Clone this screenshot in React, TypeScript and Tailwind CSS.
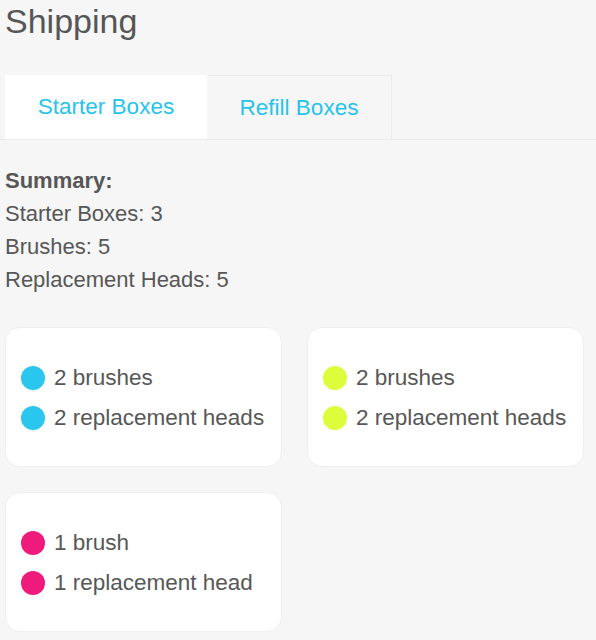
import { useState } from "react";

const boxes = [
  {
    color: "bg-[#29c6ee]",
    items: ["2 brushes", "2 replacement heads"],
  },
  {
    color: "bg-[#dcfc3c]",
    items: ["2 brushes", "2 replacement heads"],
  },
  {
    color: "bg-[#ee1a7c]",
    items: ["1 brush", "1 replacement head"],
  },
];

function BoxCard({ color, items }: { color: string; items: string[] }) {
  return (
    <div className="rounded-[15px] border border-[#efefef] bg-white pl-[15px] pt-[30px] pb-7">
      {items.map((item) => (
        <div key={item} className="flex h-10 items-center gap-[9px]">
          <span className={`h-6 w-6 shrink-0 rounded-full ${color}`} />
          <span className="text-[22.5px] leading-none text-[#575757]">{item}</span>
        </div>
      ))}
    </div>
  );
}

export default function App() {
  const [tab, setTab] = useState("starter");

  return (
    <div
      className="min-h-[640px] bg-[#f6f6f6] pb-4"
      style={{ fontFamily: '"Liberation Sans", Arial, sans-serif' }}
    >
      <h1 className="px-[5px] pt-[1px] text-[34px] leading-[40px] text-[#565656]">Shipping</h1>

      <div className="mt-[34px] flex border-b border-[#ececec] pl-[5px]">
        <button
          type="button"
          onClick={() => setTab("starter")}
          className={`h-16 w-[202px] text-[22.5px] text-[#26c3ea] ${
            tab === "starter" ? "bg-white" : "border-t border-l border-[#ececec] bg-[#f6f6f6]"
          }`}
        >
          Starter Boxes
        </button>
        <button
          type="button"
          onClick={() => setTab("refill")}
          className={`h-16 w-[185px] text-[22.5px] text-[#26c3ea] ${
            tab === "refill" ? "bg-white" : "border-t border-r border-[#ececec] bg-[#f6f6f6]"
          }`}
        >
          Refill Boxes
        </button>
      </div>

      <div className="mt-6 px-[5px] text-[22px] leading-[33px] text-[#575757]">
        <p className="font-bold">Summary:</p>
        <p>Starter Boxes: 3</p>
        <p>Brushes: 5</p>
        <p>Replacement Heads: 5</p>
      </div>

      <div className="mt-[31px] grid w-[584px] grid-cols-2 gap-x-[25px] gap-y-[25px] pl-[5px]">
        {boxes.map((box, i) => (
          <BoxCard key={i} color={box.color} items={box.items} />
        ))}
      </div>
    </div>
  );
}
